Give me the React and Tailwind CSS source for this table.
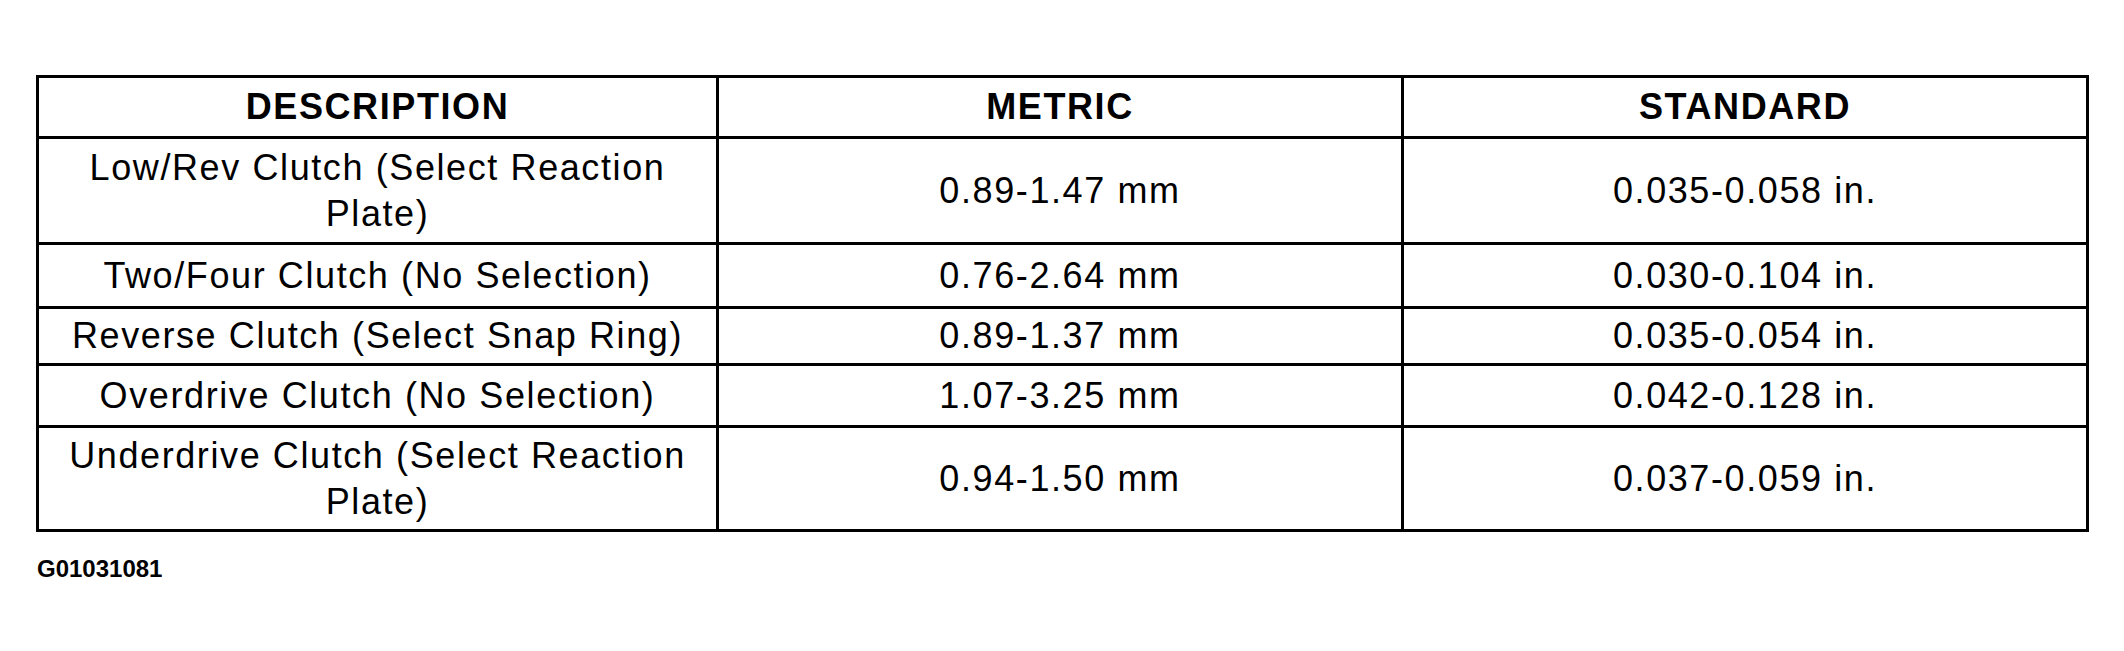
import React from "react";

const rows = [
  { desc: "Low/Rev Clutch (Select Reaction Plate)", metric: "0.89-1.47 mm", standard: "0.035-0.058 in." },
  { desc: "Two/Four Clutch (No Selection)", metric: "0.76-2.64 mm", standard: "0.030-0.104 in." },
  { desc: "Reverse Clutch (Select Snap Ring)", metric: "0.89-1.37 mm", standard: "0.035-0.054 in." },
  { desc: "Overdrive Clutch (No Selection)", metric: "1.07-3.25 mm", standard: "0.042-0.128 in." },
  { desc: "Underdrive Clutch (Select Reaction Plate)", metric: "0.94-1.50 mm", standard: "0.037-0.059 in." },
];

const Cell = ({ children, head }) => (
  <div
    className={
      "bg-white flex items-center justify-center text-center px-4 text-[36px] leading-[46px] tracking-[1.6px] text-black " +
      (head ? "font-bold" : "font-normal")
    }
  >
    {children}
  </div>
);

const App = () => {
  return (
    <div className="w-[2124px] h-[651px] bg-white font-['Liberation_Sans',Arial,sans-serif] pt-[75px] pl-[36px]">
      <div className="w-[2053px] bg-black p-[3px] grid grid-cols-[677px_682px_682px] grid-rows-[58px_103px_61px_54px_59px_101px] gap-[3px]">
        <Cell head>DESCRIPTION</Cell>
        <Cell head>METRIC</Cell>
        <Cell head>STANDARD</Cell>
        {rows.map((row, index) => (
          <React.Fragment key={index}>
            <Cell>{row.desc}</Cell>
            <Cell>{row.metric}</Cell>
            <Cell>{row.standard}</Cell>
          </React.Fragment>
        ))}
      </div>
      <p className="mt-[25px] ml-[1px] text-[24px] leading-none font-bold text-black">G01031081</p>
    </div>
  );
};

export default App;
